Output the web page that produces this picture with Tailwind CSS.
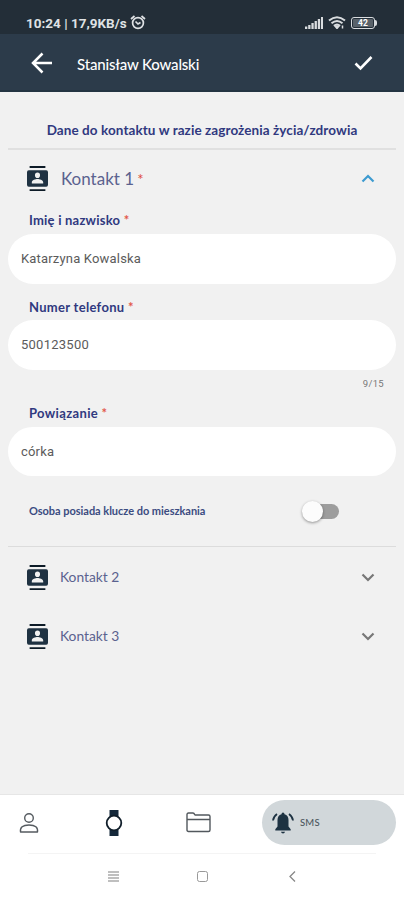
<!DOCTYPE html>
<html lang="pl">
<head>
<meta charset="utf-8">
<title>Stanisław Kowalski</title>
<script src="https://cdn.jsdelivr.net/npm/@tailwindcss/browser@4"></script>
</head>
<body class="w-[404px] h-[900px] overflow-hidden bg-[#f1f1f1] font-['Lato',sans-serif] flex flex-col">
<svg class="hidden">
  <symbol id="contact" viewBox="0 0 24 24" preserveAspectRatio="none"><path fill="#0d1b27" d="M3 0h18v1.800H3zM3 22.200h18v1.800H3z"/><path fill="#1f3242" fill-rule="evenodd" d="M2 4h20q2 0 2 2v12q0 2-2 2H2q-2 0-2-2V6q0-2 2-2zM12 6.200a2.900 2.700 0 1 0 0 5.400a2.900 2.700 0 1 0 0-5.400zM5.500 16.800h13v-1.300c0-2-4.300-3.100-6.500-3.100s-6.500 1.100-6.500 3.100z"/></symbol>
</svg>

<div class="h-[34px] shrink-0 bg-[#232e38] flex items-center pt-[11px] pl-[26px] pr-[27px] text-[#dfe2e5]">
  <span class="font-['Roboto',sans-serif] font-bold text-[13.500px] leading-4 w-[103px] whitespace-nowrap">10:24 | 17,9KB/s</span>
  <svg class="w-[16px] h-[15px] ml-[1px]" viewBox="0 0 16 15" fill="none" stroke="currentColor" stroke-width="1.7"><circle cx="8" cy="8" r="5.400"/><path d="M1 4l3.500-3M15 4l-3.500-3M5.500 6.500L8 9l2.500-1.500"/></svg>
  <div class="flex items-center gap-[5px] ml-auto">
    <svg class="w-[18px] h-[12px]" viewBox="0 0 18 12" fill="#d9dcdf"><path d="M0 9.500h2.300V12H0zM3.200 8h2.300v4H3.200zM6.400 6h2.300v6H6.400zM9.600 4h2.300v8H9.600zM12.800 2h2.300v10h-2.300zM16 0h2v12h-2z"/></svg>
    <svg class="w-[18px] h-[13px]" viewBox="0 0 18 13" fill="none" stroke="#d9dcdf" stroke-width="2"><path d="M1 4.500q8-6.500 16 0M3.500 7.300q5.500-4.500 11 0M6 9.800q3-2.500 6 0"/><path d="M7 10h4l-2 2.500zM14.500 9.500v3" fill="#d9dcdf" stroke-width="1.500"/></svg>
    <div class="flex items-center"><div class="w-[24px] h-[12px] rounded-[3px] border-[1.500px] border-[#d9dcdf] p-px flex"><div class="flex-1 bg-[#59626a] rounded-[1px] text-[8.500px] leading-[8px] font-bold text-center text-white font-['Roboto',sans-serif]">42</div></div><div class="w-[2px] h-[6px] bg-[#d9dcdf] rounded-r-sm"></div></div>
  </div>
</div>
<header class="h-[58px] shrink-0 bg-[#2c3b4a] border-b-2 border-[#233442] flex items-center pt-[2px] pl-[31px] pr-[31px] text-white">
  <svg class="w-[22px] h-[22px]" viewBox="0 0 22 22" fill="none" stroke="white" stroke-width="2.500"><path d="M21 11H2M11.500 1.500L2 11l9.500 9.500"/></svg>
  <h1 class="ml-[24px] pt-[2px] text-[15px] font-medium tracking-[-0.180px] whitespace-nowrap">Stanisław Kowalski</h1>
  <svg class="ml-auto w-[20px] h-[16px]" viewBox="0 0 20 16" fill="none" stroke="white" stroke-width="2.600"><path d="M2.500 8.500l5 5L18.500 2"/></svg>
</header>

<main class="flex-1 flex flex-col text-[#30397f]">
  <h2 class="h-[56px] pt-[28px] leading-5 text-center text-[13.500px] tracking-[0.080px] font-bold whitespace-nowrap">Dane do kontaktu w razie zagrożenia życia/zdrowia</h2>
  <div class="mx-[8px] h-[2px] bg-[#e0e0e0]"></div>
  <div class="h-[57px] flex items-center pl-[27px] pr-[29px]">
    <svg class="w-[21px] h-[25px]"><use href="#contact" width="21" height="25"/></svg>
    <span class="ml-[13px] text-[17px] text-[#5b628f] whitespace-nowrap">Kontakt 1<span class="ml-[3px] text-[#df4a3c] text-[15px]">*</span></span>
    <svg class="ml-auto w-[14px] h-[9px]" viewBox="0 0 14 9" fill="none" stroke="#3d9bd0" stroke-width="2.200"><path d="M1.500 7.500L7 2l5.500 5.500"/></svg>
  </div>
  <div class="h-[27px] pl-[29px] pt-[3px] leading-5 text-[13px] tracking-[0.220px] font-bold whitespace-nowrap">Imię i nazwisko <span class="text-[#e2574b]">*</span></div>
  <div class="mx-[8px] h-[50px] rounded-full bg-white pl-[13px] flex items-center font-['Roboto',sans-serif] text-[13px] text-[#5b5b5b]"><span class="tracking-[0.180px]">Katarzyna Kowalska</span></div>
  <div class="h-[36px] pl-[29px] pt-[13px] leading-5 text-[13px] tracking-[0.300px] font-bold whitespace-nowrap">Numer telefonu <span class="text-[#e2574b]">*</span></div>
  <div class="mx-[8px] h-[50px] rounded-full bg-white pl-[13px] flex items-center font-['Roboto',sans-serif] text-[13px] text-[#5b5b5b]"><span class="tracking-[0.250px]">500123500</span></div>
  <div class="h-[27px] pt-[8px] pr-[20px] text-right text-[9.500px] leading-3 tracking-[0.300px] text-[#777] font-['Roboto',sans-serif]">9/15</div>
  <div class="h-[30px] pl-[29px] pt-[6px] leading-5 text-[13px] tracking-[0.350px] font-bold whitespace-nowrap">Powiązanie <span class="text-[#e2574b]">*</span></div>
  <div class="mx-[8px] h-[49px] rounded-full bg-white pl-[13px] flex items-center font-['Roboto',sans-serif] text-[13px] text-[#5b5b5b]"><span class="tracking-[0.200px]">córka</span></div>
  <div class="h-[70px] flex items-center pl-[29px] pr-[65px]">
    <span class="text-[11px] tracking-[-0.030px] font-bold text-[#3b4c81] whitespace-nowrap">Osoba posiada klucze do mieszkania</span>
    <div class="ml-auto w-[36px] h-[15px] rounded-full bg-[#9d9d9d] flex items-center"><div class="w-[21px] h-[21px] -ml-px shrink-0 rounded-full bg-[#fcfcfc] shadow-[0_1px_3px_rgba(0,0,0,0.4)]"></div></div>
  </div>
  <div class="mx-[8px] h-[1px] bg-[#dcdcdc]"></div>
  <div class="h-[60px] flex items-center pl-[27px] pr-[29px]">
    <svg class="w-[21px] h-[25px]"><use href="#contact" width="21" height="25"/></svg>
    <span class="ml-[12px] text-[13.800px] text-[#5b628f]">Kontakt 2</span>
    <svg class="ml-auto w-[14px] h-[9px]" viewBox="0 0 14 9" fill="none" stroke="#777" stroke-width="2.200"><path d="M1.500 1.500L7 7l5.500-5.500"/></svg>
  </div>
  <div class="h-[60px] flex items-center pb-px pl-[27px] pr-[29px]">
    <svg class="w-[21px] h-[25px]"><use href="#contact" width="21" height="25"/></svg>
    <span class="ml-[12px] text-[13.800px] text-[#5b628f]">Kontakt 3</span>
    <svg class="ml-auto w-[14px] h-[9px]" viewBox="0 0 14 9" fill="none" stroke="#777" stroke-width="2.200"><path d="M1.500 1.500L7 7l5.500-5.500"/></svg>
  </div>
</main>

<nav class="h-[59px] shrink-0 bg-white border-t border-[#e6e6e6] flex items-center pb-[3px] pl-[19px] pr-[8px]">
  <svg class="w-[20px] h-[22px]" viewBox="0 0 20 22" fill="none" stroke="#555b60" stroke-width="1.400"><circle cx="10" cy="6" r="4.300"/><path d="M1.500 20q-1-7 8.500-7t8.500 7z" stroke-linejoin="round"/></svg>
  <svg class="ml-[66px] w-[18px] h-[26px]" viewBox="0 0 18 26"><path fill="#14283a" d="M4.500 0h9v7h-9zM4.500 19h9v7h-9z"/><circle cx="9" cy="13" r="7.300" fill="white" stroke="#101e2a" stroke-width="1.800"/></svg>
  <svg class="ml-[63px] w-[25px] h-[21px]" viewBox="0 0 25 21" fill="none" stroke="#52585d" stroke-width="1.400" stroke-linejoin="round"><path d="M1 18V2.500Q1 1 2.500 1H7q1 0 2 2h13.500Q24 3 24 4.500V18q0 1.500-1.500 1.500h-20Q1 19.500 1 18zM1 7.500h23"/></svg>
  <div class="ml-auto w-[134px] h-[45px] rounded-full bg-[#d1d7da] flex items-center pl-[10px]">
    <svg class="w-[22px] h-[22px]" viewBox="0 0 22 22"><path fill="#1d3242" d="M11 .5q1.500 0 1.500 1.800Q16.500 3.500 16.500 8v6.500l2.200 2.700v1.300H3.300v-1.300L5.500 14.500V8q0-4.500 4-5.700Q9.500.5 11 .5zM9 19.700h4q-.3 1.800-2 1.800t-2-1.800z"/><path d="M5 2Q1.500 4.500 1 8.500M17 2q3.500 2.500 4 6.500" fill="none" stroke="#1d3242" stroke-width="1.800"/></svg>
    <span class="ml-[6px] pt-[2px] text-[9.500px] font-medium tracking-[0.200px] text-[#4d575f]">SMS</span>
  </div>
</nav>
<footer class="h-[47px] shrink-0 bg-white">
  <div class="mx-[28px] h-px bg-[#f4f4f4]"></div>
  <div class="h-[46px] flex items-center pb-[2px] pl-[108px]">
    <svg class="w-[11px] h-[11px]" viewBox="0 0 11 11" stroke="#aaa" stroke-width="1.300"><path d="M0 1h11M0 4h11M0 7h11M0 10h11"/></svg>
    <div class="ml-[78px] w-[11px] h-[11px] border-[1.500px] border-[#999] rounded-[2.500px]"></div>
    <svg class="ml-[81px] w-[7px] h-[11px]" viewBox="0 0 7 11" fill="none" stroke="#888" stroke-width="1.300"><path d="M6 .5L1 5.500l5 5"/></svg>
  </div>
</footer>
</body>
</html>
